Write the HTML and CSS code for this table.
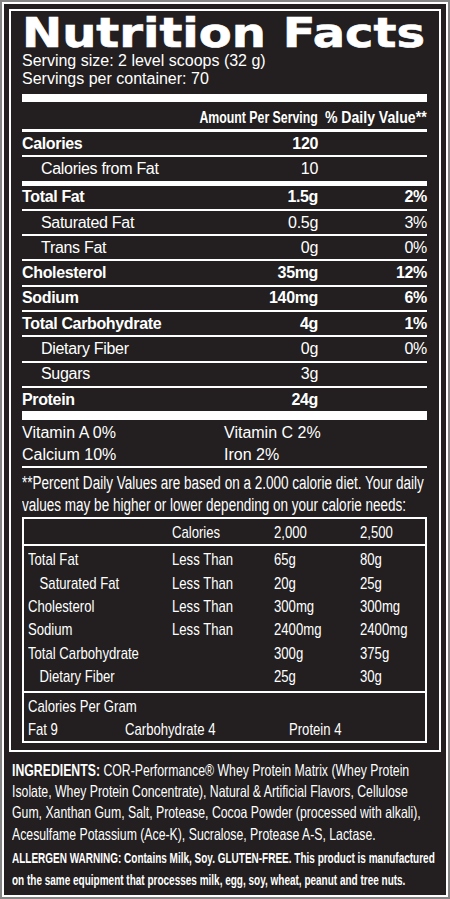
FILE: index.html
```html
<!DOCTYPE html>
<html lang="en">

<head>
    <meta charset="utf-8">
    <title>Nutrition Facts</title>

    <!-- Ajustement de la taille du viewport-->
    <meta name="viewport" content="width=device-width, initial-scale=1.0">

    <link rel="stylesheet" href="styles.css">
</head>

<body>
    <div class="etiquette">
        <div class="cadre">

            <!-- Tableau principal -->
            <section class="panneau">
                <h1 class="titre"><span>Nutrition Facts</span></h1>
                <p class="portion">Serving size: 2 level scoops (32 g)</p>
                <p class="portion">Servings per container: 70</p>

                <div class="barre-epaisse"></div>

                <div class="entete">
                    <span class="montant">Amount Per Serving</span>
                    <span class="pourcent"><span>% Daily Value**</span></span>
                </div>

                <div class="rangee gras">
                    <span class="nom">Calories</span>
                    <span class="valeur">120</span>
                    <span class="pourcent"></span>
                </div>
                <div class="rangee retrait trait-epais">
                    <span class="nom">Calories from Fat</span>
                    <span class="valeur">10</span>
                    <span class="pourcent"></span>
                </div>
                <div class="rangee gras">
                    <span class="nom">Total Fat</span>
                    <span class="valeur">1.5g</span>
                    <span class="pourcent">2%</span>
                </div>
                <div class="rangee retrait">
                    <span class="nom">Saturated Fat</span>
                    <span class="valeur">0.5g</span>
                    <span class="pourcent">3%</span>
                </div>
                <div class="rangee retrait">
                    <span class="nom">Trans Fat</span>
                    <span class="valeur">0g</span>
                    <span class="pourcent">0%</span>
                </div>
                <div class="rangee gras">
                    <span class="nom">Cholesterol</span>
                    <span class="valeur">35mg</span>
                    <span class="pourcent">12%</span>
                </div>
                <div class="rangee gras">
                    <span class="nom">Sodium</span>
                    <span class="valeur">140mg</span>
                    <span class="pourcent">6%</span>
                </div>
                <div class="rangee gras">
                    <span class="nom">Total Carbohydrate</span>
                    <span class="valeur">4g</span>
                    <span class="pourcent">1%</span>
                </div>
                <div class="rangee retrait">
                    <span class="nom">Dietary Fiber</span>
                    <span class="valeur">0g</span>
                    <span class="pourcent">0%</span>
                </div>
                <div class="rangee retrait">
                    <span class="nom">Sugars</span>
                    <span class="valeur">3g</span>
                    <span class="pourcent"></span>
                </div>
                <div class="rangee gras sans-trait">
                    <span class="nom">Protein</span>
                    <span class="valeur">24g</span>
                    <span class="pourcent"></span>
                </div>

                <div class="barre-epaisse barre-basse"></div>

                <!-- Vitamines et minéraux -->
                <div class="vitamines">
                    <span>Vitamin A 0%</span>
                    <span>Vitamin C 2%</span>
                    <span>Calcium 10%</span>
                    <span>Iron 2%</span>
                </div>

                <p class="note">
                    <span class="ligne">**Percent Daily Values are based on a 2.000 calorie diet. Your daily</span>
                    <span class="ligne">values may be higher or lower depending on your calorie needs:</span>
                </p>

                <!-- Valeurs quotidiennes -->
                <div class="tableau">
                    <div class="ligne-dv tableau-entete">
                        <span></span>
                        <span>Calories</span>
                        <span>2,000</span>
                        <span>2,500</span>
                    </div>
                    <div class="tableau-corps">
                        <div class="ligne-dv">
                            <span>Total Fat</span>
                            <span>Less Than</span>
                            <span>65g</span>
                            <span>80g</span>
                        </div>
                        <div class="ligne-dv">
                            <span class="decale">Saturated Fat</span>
                            <span>Less Than</span>
                            <span>20g</span>
                            <span>25g</span>
                        </div>
                        <div class="ligne-dv">
                            <span>Cholesterol</span>
                            <span>Less Than</span>
                            <span>300mg</span>
                            <span>300mg</span>
                        </div>
                        <div class="ligne-dv">
                            <span>Sodium</span>
                            <span>Less Than</span>
                            <span>2400mg</span>
                            <span>2400mg</span>
                        </div>
                        <div class="ligne-dv">
                            <span>Total Carbohydrate</span>
                            <span></span>
                            <span>300g</span>
                            <span>375g</span>
                        </div>
                        <div class="ligne-dv">
                            <span class="decale">Dietary Fiber</span>
                            <span></span>
                            <span>25g</span>
                            <span>30g</span>
                        </div>
                    </div>
                    <div class="tableau-calories">
                        <p class="ligne">Calories Per Gram</p>
                        <div class="ligne-grammes">
                            <span>Fat 9</span>
                            <span>Carbohydrate 4</span>
                            <span>Protein 4</span>
                        </div>
                    </div>
                </div>
            </section>

            <!-- Ingrédients et allergènes -->
            <p class="ingredients">
                <span class="ligne"><b>INGREDIENTS:</b> COR-Performance® Whey Protein Matrix (Whey Protein</span>
                <span class="ligne">Isolate, Whey Protein Concentrate), Natural &amp; Artificial Flavors, Cellulose</span>
                <span class="ligne">Gum, Xanthan Gum, Salt, Protease, Cocoa Powder (processed with alkali),</span>
                <span class="ligne">Acesulfame Potassium (Ace-K), Sucralose, Protease A-S, Lactase.</span>
            </p>
            <p class="allergenes">
                <span class="ligne">ALLERGEN WARNING: Contains Milk, Soy. GLUTEN-FREE. This product is manufactured</span>
                <span class="ligne">on the same equipment that processes milk, egg, soy, wheat, peanut and tree nuts.</span>
            </p>
        </div>
    </div>
</body>

</html>
```

FILE: styles.css
```css
/* Normalisation supplémentaire
============================================================*/

* {
    margin: 0;
    padding: 0;
    box-sizing: border-box;
}

/* Mise en page de base
============================================================*/

html {
    font-family: "Liberation Sans", Arial, sans-serif;
    font-size: 16px;
}

body {
    width: 100vw;
    height: 100vh;
    color: #fff;
    background-color: #858585;
    overflow: hidden;
}

/*Cadre gris extérieur puis filet blanc*/
.etiquette {
    height: 100%;
    border: 2px solid #858585;
}

.cadre {
    height: 100%;
    border: 2px solid #fff;
    background-color: #231f20;
    padding: 5px 5px 0;
}

/*Le tableau principal avec son filet blanc*/
.panneau {
    border: 2px solid #fff;
    padding: 0 12px 7px 11px;
}

.titre {
    margin: 5px 0 2px;
    font-family: "DejaVu Sans", sans-serif;
    font-size: 40px;
    font-weight: bold;
    line-height: 34px;
    white-space: nowrap;
}

/*Police élargie et plus grasse comme sur l'étiquette*/
.titre span {
    display: inline-block;
    transform: scaleX(1.2);
    transform-origin: left;
    -webkit-text-stroke: 0.6px #fff;
}

.portion {
    line-height: 18px;
}

.barre-epaisse {
    height: 8px;
    margin-top: 6px;
    background-color: #fff;
}

.barre-basse {
    height: 9px;
    margin-top: 0;
}

/*Une ligne de texte resserrée (police condensée simulée)*/
.ligne {
    display: block;
    white-space: nowrap;
    transform-origin: left;
}

/* Rangées des nutriments
============================================================*/

.entete {
    padding-top: 5px;
    font-size: 16px;
    font-weight: bold;
    line-height: 22px;
    border-bottom: 3px solid #fff;

    /*Conteneur flex aligné à droite*/
    display: flex;
    justify-content: flex-end;
}

.montant {
    display: inline-block;
    white-space: nowrap;
    transform: scaleX(0.77);
    transform-origin: right;
}

/*Le texte déborde vers la gauche, jamais vers la droite*/
.entete .pourcent {
    display: flex;
    justify-content: flex-end;
}

.entete .pourcent span {
    flex-shrink: 0;
    white-space: nowrap;
    transform: scaleX(0.88);
    transform-origin: right;
}

.pourcent {
    flex-shrink: 0;
    width: 109px;
    text-align: right;
}

.rangee {
    height: 25.3px;
    letter-spacing: -0.3px;
    border-bottom: 2px solid #fff;

    /*Conteneur flex en rangée*/
    display: flex;
    align-items: center;
}

.rangee .nom {
    flex-grow: 1;
}

.rangee .valeur {
    text-align: right;
}

.gras {
    font-weight: bold;
    letter-spacing: -0.35px;
}

.retrait .nom {
    padding-left: 19px;
}

.trait-epais {
    height: 28.3px;
    border-bottom-width: 5px;
}

.sans-trait {
    height: 23.3px;
    border-bottom: none;
}

/* Vitamines et note
============================================================*/

.vitamines {
    padding-top: 2px;
    line-height: 22px;
    border-bottom: 2px solid #fff;

    display: grid;
    grid-template-columns: 202px 1fr;
}

.note {
    padding-top: 4px;
    margin-bottom: 1px;
    font-size: 18px;
    line-height: 22px;
}

.note .ligne {
    transform: scaleX(0.751);
}

/* Tableau des valeurs quotidiennes
============================================================*/

.tableau {
    border: 2px solid #fff;
    font-size: 17px;
}

.ligne-dv {
    padding-left: 4px;
    line-height: 23.4px;

    display: grid;
    grid-template-columns: 144px 102px 86px 1fr;
}

.ligne-dv span,
.ligne-grammes span,
.tableau-calories .ligne {
    white-space: nowrap;
    transform: scaleX(0.772);
    transform-origin: left;
}

.tableau-entete {
    padding-top: 3px;
    line-height: 22px;
    border-bottom: 2px solid #fff;
}

.tableau-corps {
    padding: 2px 0;
    border-bottom: 2px solid #fff;
}

.ligne-dv .decale {
    padding-left: 15px;
}

.tableau-calories {
    padding: 2px 0 0 4px;
    line-height: 23px;
}

.ligne-grammes {
    display: grid;
    grid-template-columns: 97px 164px 1fr;
}

/* Ingrédients et allergènes
============================================================*/

.ingredients {
    padding: 8px 3px 0;
    font-size: 16.5px;
    line-height: 21.3px;
}

.ingredients .ligne {
    transform: scaleX(0.744);
}

.allergenes {
    padding: 2px 3px 0;
    font-size: 15px;
    font-weight: bold;
    line-height: 22px;
}

.allergenes .ligne {
    transform: scaleX(0.666);
}
```
